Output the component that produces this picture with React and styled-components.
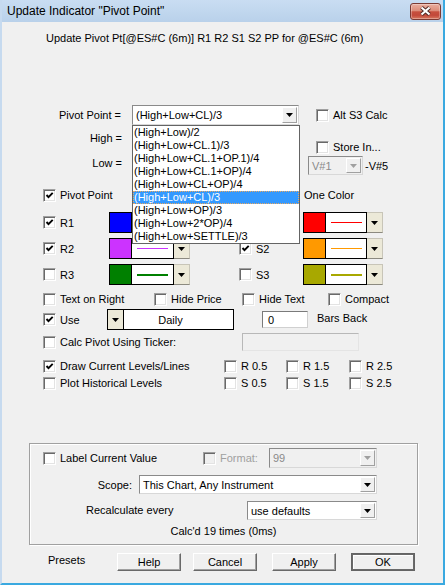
import React from 'react'
import styled, { createGlobalStyle } from 'styled-components'

const FONT = `"Liberation Sans", Arial, sans-serif`

const GlobalStyle = createGlobalStyle`
  html, body {
    margin: 0;
    padding: 0;
    background: #fff;
  }
  body {
    font-family: ${FONT};
    font-size: 11px;
    color: #000;
  }
`

// window chrome
const Window = styled.div`
  width: 445px;
  height: 585px;
  box-sizing: border-box;
  display: flex;
  flex-direction: column;
  border-left: 2px solid #c6daef;
  border-right: 2px solid #3aa9e0;
  border-bottom: 2px solid #3aa9e0;
  box-shadow: 0 1px 0 #1d1d1d;
`

const TitleBar = styled.div`
  flex: none;
  height: 22px;
  display: flex;
  align-items: center;
  justify-content: space-between;
  padding: 0 2px 0 5px;
  background: linear-gradient(#c9ddf2, #b9d1ea);
  font-size: 12px;
`

const CloseButton = styled.div`
  width: 31px;
  height: 17px;
  box-sizing: border-box;
  display: flex;
  align-items: center;
  justify-content: center;
  border: 1px solid #7b3a33;
  border-radius: 3px;
  background: linear-gradient(#eaae9f 0%, #dc8c79 45%, #c7503e 52%, #c2493a 75%, #d8785f 100%);
  box-shadow: inset 0 0 0 1px rgba(255, 255, 255, 0.3);
`

const Client = styled.div`
  position: relative;
  flex: 1;
  display: flex;
  flex-direction: column;
  background: #f0f0f0;
`

// layout rows
const FormRow = styled.div`
  flex: none;
  display: grid;
  grid-template-columns: ${p => p.$cols || 'auto'};
  justify-content: ${p => p.$center ? 'center' : 'start'};
  align-items: center;
  height: ${p => p.$h}px;
  margin-top: ${p => p.$mt || 0}px;
  padding-left: ${p => p.$pl || 0}px;
  white-space: nowrap;
`

const RightLabel = styled.div`
  text-align: right;
  padding-right: ${p => p.$pr || 10}px;
`

const Lifted = styled.div`
  margin-bottom: ${p => p.$up * 2}px;
`

const HLBlock = styled.div`
  flex: none;
  display: flex;
  height: 50px;
`

const LabelCol = styled.div`
  width: 130px;
  box-sizing: border-box;
  padding: 6px 10px 0 0;
  text-align: right;
  line-height: 14px;
  & > div + div {
    margin-top: 11px;
  }
`

const SideCol = styled.div`
  margin-left: 176px;
  display: flex;
  flex-direction: column;
`

const SideRow = styled.div`
  display: flex;
  align-items: center;
  height: ${p => p.$h}px;
  margin-top: ${p => p.$mt}px;
  padding-left: ${p => p.$pl || 0}px;
  gap: 2px;
`

// checkbox
const CheckWrap = styled.label`
  display: flex;
  align-items: center;
  gap: 4px;
  color: ${p => p.$disabled ? '#a0a0a0' : '#000'};
`

const Box = styled.span`
  width: 13px;
  height: 13px;
  box-sizing: border-box;
  flex: none;
  display: flex;
  align-items: center;
  justify-content: center;
  border: 1px solid;
  border-color: #a0a0a0 #fff #fff #a0a0a0;
  box-shadow: inset 1px 1px #696969, inset -1px -1px #e3e3e3;
  background: ${p => p.$disabled ? '#f0f0f0' : '#fff'};
`

function Check({ label, checked, disabled }) {
  return (
    <CheckWrap $disabled={disabled}>
      <Box $disabled={disabled}>
        {checked && (
          <svg width="11" height="11" viewBox="0 0 11 11">
            <path d="M2.5 5 L4.5 7.2 L8.7 2.8" fill="none" stroke="#000" strokeWidth="1.9" />
          </svg>
        )}
      </Box>
      {label}
    </CheckWrap>
  )
}

// combo boxes
const Arrow = ({ color = '#000' }) => (
  <svg width="7" height="4" viewBox="0 0 7 4">
    <polygon points="0,0 7,0 3.5,4" fill={color} />
  </svg>
)

const ComboBox = styled.div`
  display: flex;
  width: ${p => p.$w}px;
  height: ${p => p.$h || 20}px;
  box-sizing: border-box;
  padding: 1px;
  border: 1px solid;
  border-color: #8a8a8a #d8d8d8 #d8d8d8 #8a8a8a;
  background: ${p => p.$disabled ? '#f0f0f0' : '#fff'};
  color: ${p => p.$disabled ? '#8a8a8a' : '#000'};
`

const ComboText = styled.div`
  flex: 1;
  display: flex;
  align-items: center;
  padding-left: 2px;
  overflow: hidden;
  white-space: nowrap;
`

const ComboButton = styled.div`
  width: 15px;
  flex: none;
  box-sizing: border-box;
  display: flex;
  align-items: center;
  justify-content: center;
  background: #f0f0f0;
  border: 1px solid;
  border-color: #fff #a0a0a0 #a0a0a0 #fff;
`

function Combo({ w, h, value, disabled }) {
  return (
    <ComboBox $w={w} $h={h} $disabled={disabled}>
      <ComboText>{value}</ComboText>
      <ComboButton>
        <Arrow color={disabled ? '#a0a0a0' : '#000'} />
      </ComboButton>
    </ComboBox>
  )
}

// colour + line style picker
const Picker = styled.div`
  display: flex;
  width: ${p => p.$w}px;
  height: 21px;
  box-sizing: border-box;
`

const Swatch = styled.div`
  width: 23px;
  box-sizing: border-box;
  border: 1px solid #000;
  background: ${p => p.$c};
`

const LineBox = styled.div`
  flex: 1;
  box-sizing: border-box;
  display: flex;
  align-items: center;
  justify-content: center;
  background: #fff;
  border: 1px solid #000;
  border-left: none;
`

const Stroke = styled.div`
  width: 31px;
  height: ${p => p.$t}px;
  background: ${p => p.$c};
`

const PickButton = styled.div`
  width: 16px;
  box-sizing: border-box;
  display: flex;
  align-items: center;
  justify-content: center;
  background: #ece9d8;
  border: 1px solid #c8c5b8;
  border-left: none;
  border-bottom-color: #8c8a80;
`

function LinePicker({ color, thick, w = 81 }) {
  return (
    <Picker $w={w}>
      <Swatch $c={color} />
      <LineBox>
        <Stroke $c={color} $t={thick ? 2 : 1} />
      </LineBox>
      <PickButton>
        <Arrow />
      </PickButton>
    </Picker>
  )
}

// period picker: button on the left
const PeriodBox = styled.div`
  display: flex;
  width: 127px;
  height: 21px;
  box-sizing: border-box;
  border: 1px solid #000;
  background: #fff;
`

const PeriodButton = styled.div`
  width: 16px;
  box-sizing: border-box;
  display: flex;
  align-items: center;
  justify-content: center;
  background: #ece9d8;
  border-right: 1px solid #000;
`

const PeriodText = styled.div`
  flex: 1;
  display: flex;
  align-items: center;
  justify-content: center;
  margin-right: 16px;
`

// text fields
const Field = styled.div`
  width: ${p => p.$w}px;
  height: ${p => p.$h}px;
  box-sizing: border-box;
  display: flex;
  align-items: center;
  padding-left: 5px;
  border: 1px solid;
  border-color: ${p => p.$disabled ? '#b8b8b8 #e4e4e4 #e4e4e4 #b8b8b8' : '#7a7a7a #d0d0d0 #d0d0d0 #7a7a7a'};
  background: ${p => p.$disabled ? '#f0f0f0' : '#fff'};
`

// drop-down list lying over the form
const ListBox = styled.div`
  position: absolute;
  left: 130px;
  top: 103px;
  width: 168px;
  box-sizing: border-box;
  border: 1px solid #646464;
  background: #fff;
  z-index: 2;
`

const ListItem = styled.div`
  height: 13px;
  line-height: 13px;
  padding-left: 1px;
  white-space: nowrap;
  box-sizing: border-box;
  background: ${p => p.$selected ? '#3399ff' : 'transparent'};
  color: ${p => p.$selected ? '#fff' : '#000'};
  outline: ${p => p.$selected ? '1px dotted #e9a860' : 'none'};
  outline-offset: -1px;
`

// group box
const GroupBox = styled.div`
  flex: none;
  display: flex;
  flex-direction: column;
  width: 389px;
  height: 102px;
  box-sizing: border-box;
  margin: 53px 0 0 27px;
  border: 1px solid #a0a0a0;
  box-shadow: inset 1px 1px #fff, 1px 1px #fff;
`

// push buttons
const Button = styled.button`
  width: 64px;
  height: 18px;
  padding: 0;
  box-sizing: border-box;
  font: 11px ${FONT};
  color: #000;
  background: #f0f0f0;
  border: 1px solid;
  border-color: ${p => p.$default ? '#646464' : '#fff #696969 #696969 #fff'};
  box-shadow: ${p => p.$default
    ? 'inset 0 0 0 1px #6a6a6a, inset 2px 2px #fff'
    : 'inset -1px -1px #a0a0a0'};
`

const formulas = [
  '(High+Low)/2',
  '(High+Low+CL.1)/3',
  '(High+Low+CL.1+OP.1)/4',
  '(High+Low+CL.1+OP)/4',
  '(High+Low+CL+OP)/4',
  '(High+Low+CL)/3',
  '(High+Low+OP)/3',
  '(High+Low+2*OP)/4',
  '(High+Low+SETTLE)/3',
]

const levels = [
  { r: 'R1', s: 'S1', rc: '#0000ff', sc: '#ff0000', sOn: true },
  { r: 'R2', s: 'S2', rc: '#cc33ff', sc: '#ff9900', sOn: true, rOn: true },
  { r: 'R3', s: 'S3', rc: '#008000', sc: '#a8a800', thick: true },
]

export default function App() {
  return (
    <>
      <GlobalStyle />
      <Window>
        <TitleBar>
          <span>Update Indicator "Pivot Point"</span>
          <CloseButton>
            <svg width="13" height="10" viewBox="0 0 13 10">
              <path d="M2.5 1.5 L10.5 8.5 M10.5 1.5 L2.5 8.5" stroke="#4c2622" strokeWidth="4" />
              <path d="M2.5 1.5 L10.5 8.5 M10.5 1.5 L2.5 8.5" stroke="#fff" strokeWidth="2.2" />
            </svg>
          </CloseButton>
        </TitleBar>

        <Client>
          <FormRow $h={32} $pl={44}>
            Update Pivot Pt[@ES#C (6m)] R1 R2 S1 S2 PP for @ES#C (6m)
          </FormRow>

          <FormRow $h={20} $mt={51} $cols="130px 184px auto">
            <RightLabel $pr={11}>Pivot Point =</RightLabel>
            <Combo w={167} value="(High+Low+CL)/3" />
            <Check label="Alt S3 Calc" />
          </FormRow>

          <HLBlock>
            <LabelCol>
              <div>High =</div>
              <div>Low =</div>
            </LabelCol>
            <SideCol>
              <SideRow $h={14} $mt={15} $pl={8}>
                <Check label="Store In..." />
              </SideRow>
              <SideRow $h={19} $mt={2}>
                <Combo w={55} h={19} value="V#1" disabled />
                <span>-V#5</span>
              </SideRow>
            </SideCol>
          </HLBlock>

          <FormRow $h={14} $mt={13} $pl={41} $cols="244px auto">
            <Check label="Pivot Point" checked />
            <Check label="One Color" />
          </FormRow>

          {levels.map((lv, i) => (
            <FormRow key={lv.r} $h={21} $mt={i === 0 ? 10 : 5} $pl={41} $cols="66px 130px 64px auto">
              <Check label={lv.r} checked={i < 2} />
              <LinePicker color={lv.rc} thick={lv.thick} />
              <Check label={lv.s} checked={lv.sOn} />
              <LinePicker color={lv.sc} thick={lv.thick} w={80} />
            </FormRow>
          ))}

          <FormRow $h={14} $mt={7} $pl={41} $cols="111px 88px 86px auto">
            <Check label="Text on Right" />
            <Check label="Hide Price" />
            <Check label="Hide Text" />
            <Check label="Compact" />
          </FormRow>

          <FormRow $h={21} $mt={3} $pl={41} $cols="64px 155px 55px auto">
            <Check label="Use" checked />
            <PeriodBox>
              <PeriodButton>
                <Arrow />
              </PeriodButton>
              <PeriodText>Daily</PeriodText>
            </PeriodBox>
            <Field $w={46} $h={17}>0</Field>
            <Lifted $up={2}>Bars Back</Lifted>
          </FormRow>

          <FormRow $h={18} $mt={3} $pl={41} $cols="199px auto">
            <Check label="Calc Pivot Using Ticker:" />
            <Field $w={117} $h={18} $disabled />
          </FormRow>

          <FormRow $h={14} $mt={8} $pl={41} $cols="181px 62px 63px auto">
            <Check label="Draw Current Levels/Lines" checked />
            <Check label="R 0.5" />
            <Check label="R 1.5" />
            <Check label="R 2.5" />
          </FormRow>

          <FormRow $h={14} $mt={3} $pl={41} $cols="181px 62px 63px auto">
            <Check label="Plot Historical Levels" />
            <Check label="S 0.5" />
            <Check label="S 1.5" />
            <Check label="S 2.5" />
          </FormRow>

          <GroupBox>
            <FormRow $h={20} $mt={4} $pl={13} $cols="160px 66px auto">
              <Check label="Label Current Value" />
              <Check label="Format:" disabled />
              <Combo w={108} value="99" disabled />
            </FormRow>
            <FormRow $h={19} $mt={7} $cols="109px auto">
              <RightLabel $pr={7}>Scope:</RightLabel>
              <Combo w={238} h={19} value="This Chart, Any Instrument" />
            </FormRow>
            <FormRow $h={19} $mt={7} $pl={56} $cols="161px auto">
              <Lifted $up={1}>Recalculate every</Lifted>
              <Combo w={130} h={19} value="use defaults" />
            </FormRow>
            <FormRow $h={14} $mt={4} $center>
              Calc'd 19 times (0ms)
            </FormRow>
          </GroupBox>

          <FormRow $h={18} $mt={8} $pl={46} $cols="69px 76px 79px 79px auto">
            <Lifted $up={2}>Presets</Lifted>
            <Button>Help</Button>
            <Button>Cancel</Button>
            <Button>Apply</Button>
            <Button $default>OK</Button>
          </FormRow>

          <ListBox>
            {formulas.map(f => (
              <ListItem key={f} $selected={f === '(High+Low+CL)/3'}>{f}</ListItem>
            ))}
          </ListBox>
        </Client>
      </Window>
    </>
  )
}
